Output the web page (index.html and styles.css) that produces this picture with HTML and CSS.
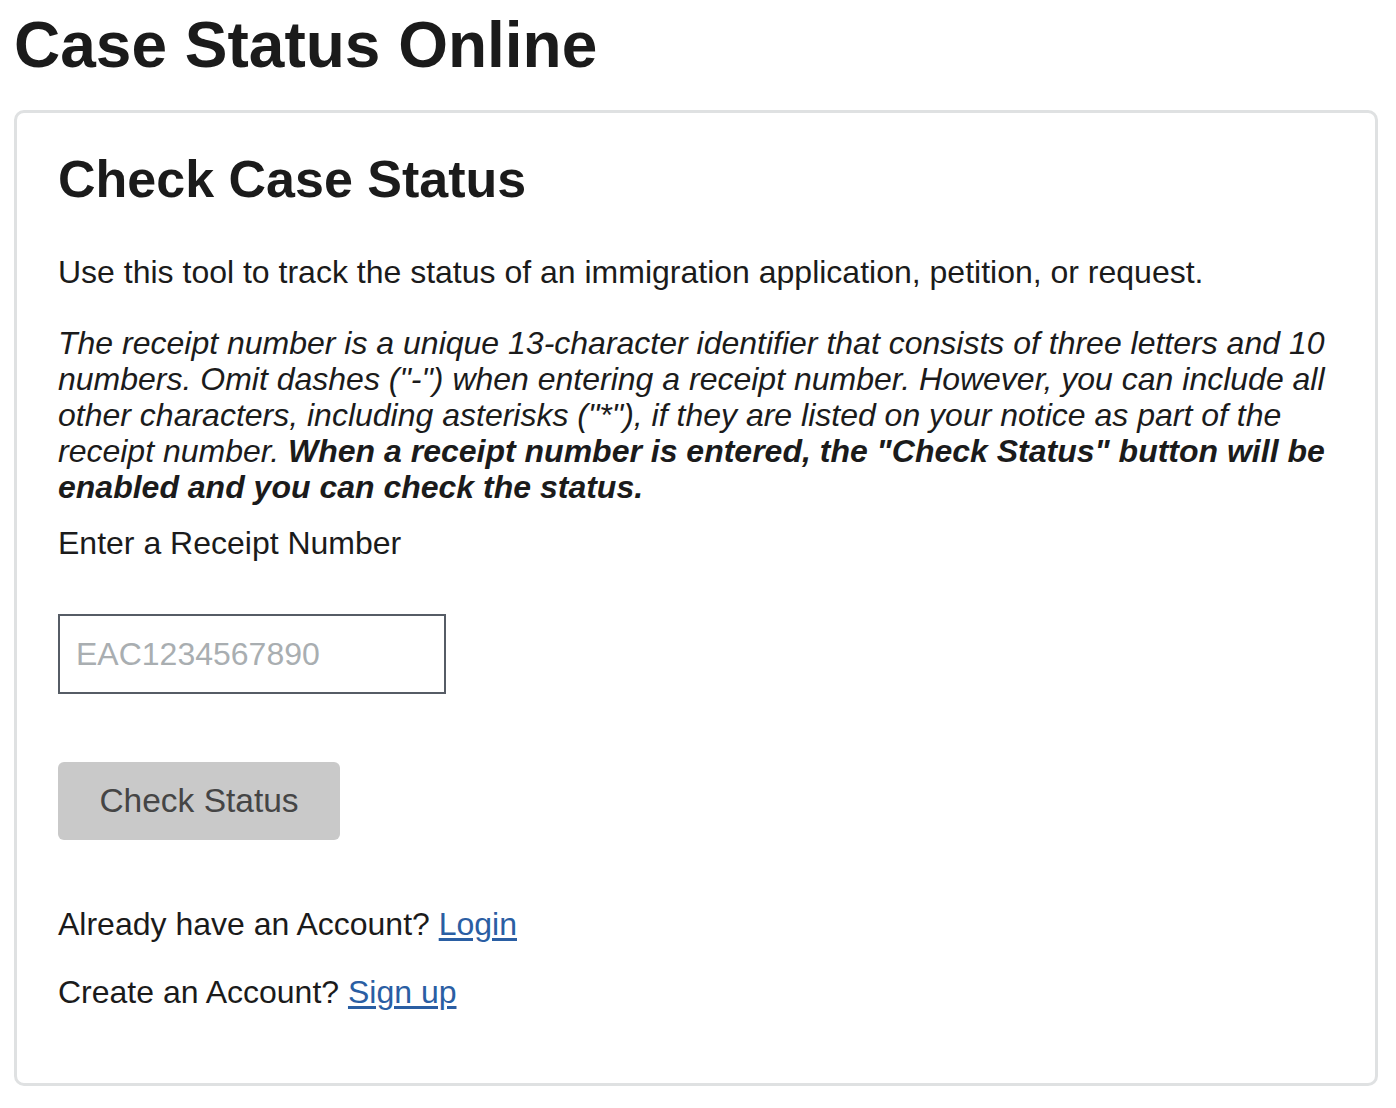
FILE: index.html
```html
<!DOCTYPE html>
<html lang="en">
<head>
<meta charset="utf-8">
<title>Case Status Online</title>
<link rel="stylesheet" href="styles.css">
</head>
<body>
<h1 class="page-title">Case Status Online</h1>
<main class="card">
  <h2 class="card-title">Check Case Status</h2>
  <p class="intro">Use this tool to track the status of an immigration application, petition, or request.</p>
  <p class="note">The receipt number is a unique 13-character identifier that consists of three letters and 10 numbers. Omit dashes ("-") when entering a receipt number. However, you can include all other characters, including asterisks ("*"), if they are listed on your notice as part of the receipt number. <strong>When a receipt number is entered, the "Check Status" button will be enabled and you can check the status.</strong></p>
  <label class="label" for="receipt">Enter a Receipt Number</label>
  <input class="receipt-input" id="receipt" type="text" placeholder="EAC1234567890">
  <button class="check-btn" type="button" disabled>Check Status</button>
  <p class="account">Already have an Account? <a href="#">Login</a></p>
  <p class="account second">Create an Account? <a href="#">Sign up</a></p>
</main>
</body>
</html>
```
FILE: styles.css
```css
html, body {
  margin: 0;
  background: #ffffff;
}
body {
  padding: 9px 18px 0 14px;
  font-family: "Liberation Sans", Arial, Helvetica, sans-serif;
  color: #1b1b1b;
}
.page-title {
  margin: 0 0 29px 0;
  font-size: 64px;
  line-height: 72px;
  font-weight: 700;
}
.card {
  display: flex;
  flex-direction: column;
  align-items: flex-start;
  border: 3px solid #dfe1e2;
  border-radius: 10px;
  padding: 36px 42px 73px 41px;
}
.card-title {
  margin: 0;
  font-size: 52px;
  line-height: 60px;
  font-weight: 700;
}
.intro {
  margin: 45px 0 0 0;
  font-size: 32px;
  line-height: 36px;
}
.note {
  margin: 35px 0 0 0;
  font-size: 32px;
  line-height: 36px;
  font-style: italic;
}
.note strong {
  font-weight: 700;
}
.label {
  margin-top: 20px;
  font-size: 32px;
  line-height: 36px;
}
.receipt-input {
  margin-top: 53px;
  box-sizing: border-box;
  width: 388px;
  height: 80px;
  border: 2px solid #565c65;
  border-radius: 0;
  padding: 0 16px;
  font-family: "Liberation Sans", Arial, Helvetica, sans-serif;
  font-size: 32px;
  color: #1b1b1b;
  outline: none;
}
.receipt-input::placeholder {
  color: #a9aeb1;
}
.check-btn {
  margin-top: 68px;
  box-sizing: border-box;
  width: 282px;
  height: 78px;
  border: none;
  border-radius: 6px;
  background: #c9c9c9;
  color: #454545;
  font-family: "Liberation Sans", Arial, Helvetica, sans-serif;
  font-size: 33.5px;
  padding: 0;
}
.account {
  margin: 66px 0 0 0;
  font-size: 32px;
  line-height: 36px;
}
.account.second {
  margin-top: 32px;
}
.account a {
  color: #2a5ea3;
  text-decoration: underline;
  text-underline-offset: 3px;
}
```
